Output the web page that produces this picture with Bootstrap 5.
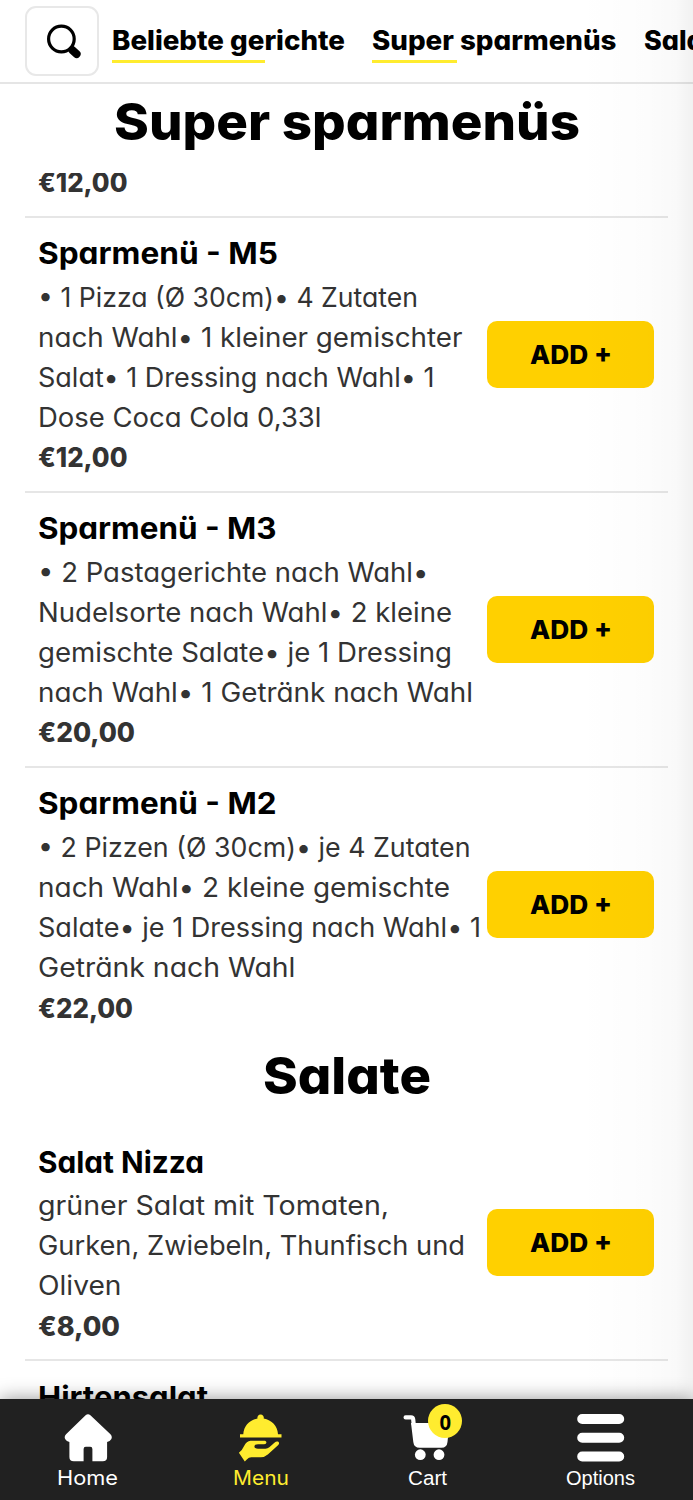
<!DOCTYPE html>
<html lang="de">
<head>
<meta charset="utf-8">
<meta name="viewport" content="width=device-width, initial-scale=1">
<title>Speisekarte</title>
<link rel="stylesheet" href="https://cdn.jsdelivr.net/npm/bootstrap@5.3.0/dist/css/bootstrap.min.css">
<style>
body{height:1500px;overflow:hidden;background:#fff;color:#000;font-family:Inter,"Liberation Sans",sans-serif;font-feature-settings:"cv11";}
.fit{display:inline-block;white-space:nowrap;transform-origin:0 50%;text-align:left}
.topbar{height:84px;border-bottom:2px solid #e5e5e5;padding-left:25px}
.search-btn{width:74px;height:70px;border:2px solid #e8e8e8;border-radius:11px;margin-top:6px;margin-right:13px}
.chip{font-size:26.5px;font-weight:800;line-height:40px;height:43px;margin-top:20px;margin-right:27px}
.chip a{color:#000;text-decoration:none;display:block;height:40px}
.chip-line{height:3px;background:#ffec2f}
.cat-title{font-size:51px;font-weight:780;line-height:75px;margin:0}
.cat-top{height:89px}
.cat-mid{height:85.6px;line-height:70px}
.menu-area{height:1226px;padding:0 25px}
.dish{padding:13.4px 14px 13.4px 13.4px;border-bottom:2px solid #e6e6e6}
.dish.cut{margin-top:-10.8px;padding-top:0}
.dish.last{border-bottom:0;padding-bottom:13px}
.dish-name{font-size:30px;font-weight:650;line-height:45.4px;height:45.4px;margin:0}
.dish-line{font-size:26.5px;line-height:40.2px;height:40.2px;color:#333}
.price{font-weight:800}
.add-btn,.add-btn:hover{width:167px;height:67px;background:#ffd000;border:0;border-radius:10px;font-size:26px;font-weight:800;color:#000;padding:0;margin-left:-10px}
.tabs-bar{height:101px;background:#212121;box-shadow:0 0 18px rgba(0,0,0,.42);z-index:2}
.tab-item{color:#fff;text-decoration:none;font-size:20px;line-height:30px;padding-top:13px}
.tab-item svg{display:block;margin:0 auto 1px}
.tab-item.arial{font-family:"Liberation Sans",sans-serif}
.tab-item.on{color:#ffec2f}
.t1{width:175px}.t2{width:171px}.t3{width:162px}.t4{width:185px}
.cart-count{left:82px;top:5px;width:34px;height:34px;border-radius:50%;background:#ffec2f;color:#000;font:700 22px/34px "Open Sans",sans-serif}
.cart-count span{display:inline-block;transform:scaleX(.92)}
.edge{right:0;top:0;width:115px;height:1399px;pointer-events:none;z-index:1;background:linear-gradient(to right,rgba(0,0,0,0),rgba(0,0,0,.01) 60%,rgba(0,0,0,.025) 85%,rgba(0,0,0,.055))}
</style>
<script src="https://cdn.jsdelivr.net/npm/bootstrap@5.3.0/dist/js/bootstrap.bundle.min.js"></script>
</head>
<body class="position-relative">
<header class="topbar d-flex overflow-hidden">
  <button class="search-btn bg-white p-0 flex-shrink-0" aria-label="Suche">
    <svg class="d-block" width="70" height="66" viewBox="27 8 70 66" fill="none" stroke="#000"><circle cx="61.4" cy="39" r="12.8" stroke-width="3.2"/><path d="M69.700 47.300l2.500 2.500" stroke-width="5"/><path d="M72.200 50l4.400 4" stroke-width="8" stroke-linecap="round"/></svg>
  </button>
  <div class="chip flex-shrink-0"><a href="#"><span class="fit" data-w="233">Beliebte gerichte</span></a><div class="chip-line" style="width:153px"></div></div>
  <div class="chip flex-shrink-0"><a href="#"><span class="fit" data-w="244.500">Super sparmenüs</span></a><div class="chip-line" style="width:85px"></div></div>
  <div class="chip flex-shrink-0"><a href="#"><span class="fit" data-w="86">Salate</span></a></div>
</header>
<h1 class="cat-title cat-top text-center"><span class="fit" data-w="466">Super sparmenüs</span></h1>
<main class="menu-area overflow-hidden">
  <div class="dish cut"><div class="dish-line price"><span class="fit" data-w="89.500">€12,00</span></div></div>
  <article class="dish d-flex align-items-center justify-content-between">
    <div>
      <h2 class="dish-name"><span class="fit" data-w="240">Sparmenü - M5</span></h2>
      <div class="dish-line"><span class="fit" data-w="380">• 1 Pizza (Ø 30cm)• 4 Zutaten</span></div>
      <div class="dish-line"><span class="fit" data-w="424.500">nach Wahl• 1 kleiner gemischter</span></div>
      <div class="dish-line"><span class="fit" data-w="396.500">Salat• 1 Dressing nach Wahl• 1</span></div>
      <div class="dish-line"><span class="fit" data-w="283.500">Dose Coca Cola 0,33l</span></div>
      <div class="dish-line price"><span class="fit" data-w="89.500">€12,00</span></div>
    </div>
    <button class="add-btn btn flex-shrink-0"><span class="fit" data-w="82">ADD +</span></button>
  </article>
  <article class="dish d-flex align-items-center justify-content-between">
    <div>
      <h2 class="dish-name"><span class="fit" data-w="238.500">Sparmenü - M3</span></h2>
      <div class="dish-line"><span class="fit" data-w="390.500">• 2 Pastagerichte nach Wahl•</span></div>
      <div class="dish-line"><span class="fit" data-w="414">Nudelsorte nach Wahl• 2 kleine</span></div>
      <div class="dish-line"><span class="fit" data-w="414">gemischte Salate• je 1 Dressing</span></div>
      <div class="dish-line"><span class="fit" data-w="435">nach Wahl• 1 Getränk nach Wahl</span></div>
      <div class="dish-line price"><span class="fit" data-w="97">€20,00</span></div>
    </div>
    <button class="add-btn btn flex-shrink-0"><span class="fit" data-w="82">ADD +</span></button>
  </article>
  <article class="dish last d-flex align-items-center justify-content-between">
    <div>
      <h2 class="dish-name"><span class="fit" data-w="238.500">Sparmenü - M2</span></h2>
      <div class="dish-line"><span class="fit" data-w="432.500">• 2 Pizzen (Ø 30cm)• je 4 Zutaten</span></div>
      <div class="dish-line"><span class="fit" data-w="412">nach Wahl• 2 kleine gemischte</span></div>
      <div class="dish-line"><span class="fit" data-w="443">Salate• je 1 Dressing nach Wahl• 1</span></div>
      <div class="dish-line"><span class="fit" data-w="257.500">Getränk nach Wahl</span></div>
      <div class="dish-line price"><span class="fit" data-w="95">€22,00</span></div>
    </div>
    <button class="add-btn btn flex-shrink-0"><span class="fit" data-w="82">ADD +</span></button>
  </article>
  <h1 class="cat-title cat-mid text-center"><span class="fit" data-w="168">Salate</span></h1>
  <article class="dish d-flex align-items-center justify-content-between">
    <div>
      <h2 class="dish-name"><span class="fit" data-w="166">Salat Nizza</span></h2>
      <div class="dish-line"><span class="fit" data-w="351">grüner Salat mit Tomaten,</span></div>
      <div class="dish-line"><span class="fit" data-w="427">Gurken, Zwiebeln, Thunfisch und</span></div>
      <div class="dish-line"><span class="fit" data-w="83.500">Oliven</span></div>
      <div class="dish-line price"><span class="fit" data-w="82">€8,00</span></div>
    </div>
    <button class="add-btn btn flex-shrink-0"><span class="fit" data-w="82">ADD +</span></button>
  </article>
  <article class="dish"><h2 class="dish-name"><span class="fit" data-w="170">Hirtensalat</span></h2></article>
</main>
<nav class="tabs-bar d-flex position-relative text-center">
  <a href="#" class="tab-item t1"><svg width="50" height="50" viewBox="63 1412 50 50" fill="#fff"><path d="M85.600 1415.300q2.400-2.200 4.800 0l19.800 18.600q2.600 2.700 1 5.400-1.200 2.300-4.100 2.600v15q0 4.400-4.400 4.400h-10.300v-12.300q0-2.300-2.200-2.300h-4.400q-2.200 0-2.200 2.300v12.300h-9.800q-4.400 0-4.400-4.400v-15q-2.900-.3-4.100-2.600-1.600-2.700 1-5.400z"/></svg><span class="fit" data-w="61">Home</span></a>
  <a href="#" class="tab-item on t2"><svg width="50" height="50" viewBox="236 1412 50 50" fill="#ffec2f"><path d="M257.500 1418.400a3.200 3.200 0 1 1 6.200 0c8 1.500 14 7.500 14.300 15.900h3.500v3.200h-41.500v-3.200h3.300c.4-8.400 6.200-14.400 14.200-15.900z"/><path d="M250.500 1440.800h14.500q2.200.8 1 2.800-.5.700-2 .7h-6q-3.600 0-3.600 2.300 0 2.100 3.600 2.100h7.500q2.200 0 3.800-1.400l5.400-4.700q1.500-1.600 3.300-1 2 1.200.3 3.400l-10.500 9.500q-3 2.700-7 2.700h-9.500q-2.500 0-4.500 2.300l-2 2-5.900-8.800q3.400-2.500 5.200-6.700 2.500-4.800 6.400-5.200z"/></svg><span class="fit" data-w="56">Menu</span></a>
  <a href="#" class="tab-item arial t3 position-relative"><svg width="50" height="50" viewBox="402 1412 50 50" fill="#fff"><path d="M405.600 1417.400h5.400q2 0 2.200 2l.5 5" fill="none" stroke="#fff" stroke-width="4.200" stroke-linecap="round" stroke-linejoin="round"/><path d="M411 1423h38.500l-2 19q-.6 5.800-6 5.800h-21.800q-5.800 0-6.400-5.800z"/><circle cx="420.300" cy="1454.700" r="5.400"/><circle cx="439" cy="1454.700" r="5.400"/></svg><span class="fit" data-w="39">Cart</span><span class="cart-count position-absolute"><span>0</span></span></a>
  <a href="#" class="tab-item arial t4"><svg width="50" height="50" viewBox="576 1412 50 50" fill="none" stroke="#fff" stroke-width="10" stroke-linecap="round"><path d="M582.200 1419h37M582.200 1437.800h37M582.200 1456.500h37"/></svg><span class="fit" data-w="69">Options</span></a>
</nav>
<div class="edge position-absolute"></div>
<script>
// Widen each label to its intended measure, independent of the installed font.
document.querySelectorAll('.fit').forEach(function (el) {
  var w = Number(el.dataset.w);
  var natural = el.getBoundingClientRect().width;
  el.style.width = w + 'px';
  el.style.transform = 'scaleX(' + w / natural + ')';
});
</script>
</body>
</html>
